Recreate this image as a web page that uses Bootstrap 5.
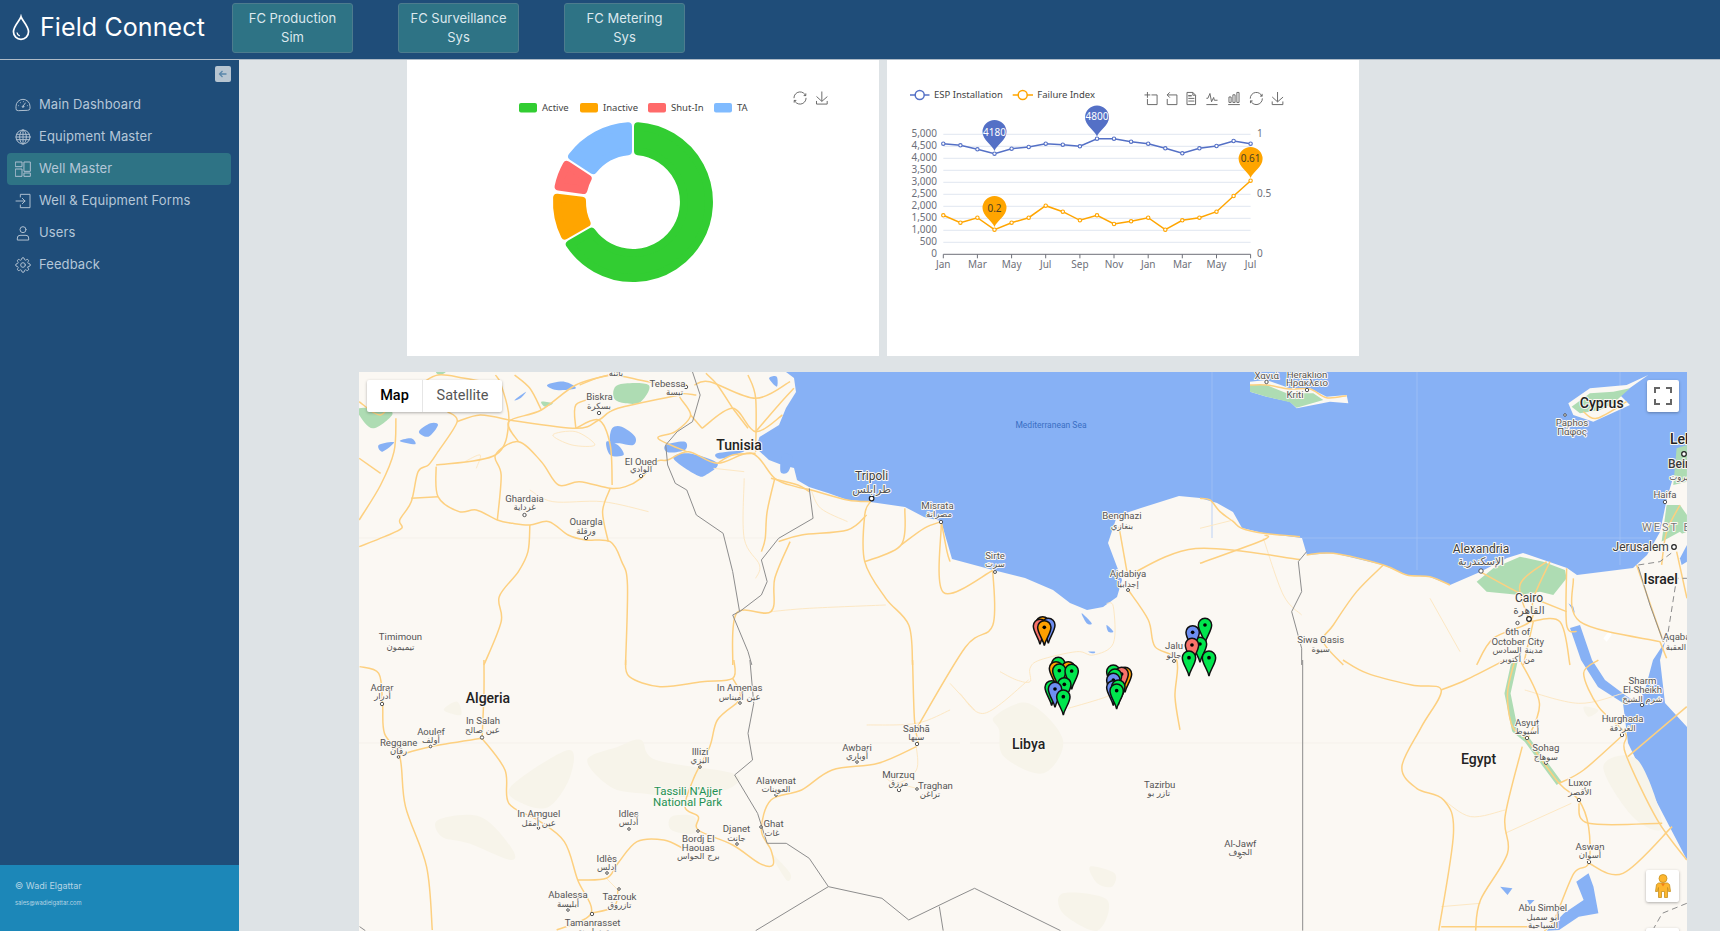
<!DOCTYPE html>
<html lang="en">
<head>
<meta charset="utf-8">
<title>Field Connect</title>
<link href="https://cdn.jsdelivr.net/npm/bootstrap@5.3.0/dist/css/bootstrap.min.css" rel="stylesheet">
<style>
html,body{height:100%;overflow:hidden}
body{background:#dee3e6;font-family:Inter,"Noto Sans",sans-serif}
.fc-top{height:60px;background:#1f4d79;border-bottom:1px solid #aebbc7;padding:0;flex-wrap:nowrap;align-items:flex-start;justify-content:flex-start}
.fc-brand{width:232px;height:55px;padding:0 0 0 11px;margin:0;gap:9px;color:#fff;font-size:25px;font-weight:400;letter-spacing:.1px}
.fc-brand:hover{color:#fff}
.fc-mods{gap:45px;margin-top:3px}
.fc-btn{width:121px;height:50px;padding:4px 11px;background:#2e7385;border:1px solid #4d7c8e;border-radius:3px;color:#dce8ee;font-size:13px;line-height:19px}
.fc-shell{height:calc(100vh - 60px);overflow:hidden}
.fc-side{width:239px;flex:none;background:#1f4d79}
.fc-collapse{width:16px;height:16px;padding:0;margin:6px 8px 0 0;background:#b7c5d1;border:0;border-radius:2px;line-height:0}
.fc-nav{margin:7px 8px 0 7px}
.fc-nav .nav-link{height:32px;padding:0 0 0 8px;gap:8px;color:#b5c7d8;font-size:13px;letter-spacing:.1px;border-radius:4px}
.fc-nav .nav-link.active{background:#2e7385;color:#b5c7d8}
.fc-nav svg{width:16px;height:16px;flex:none;fill:none;stroke:#aebfd0;stroke-width:1.5;stroke-linecap:round;stroke-linejoin:round}
.fc-foot{height:66px;background:#1c87b8;color:#b5d4e4;padding:14.500px 15px 0;font-size:9px;line-height:12px}
.fc-foot div+div{font-size:5.800px;margin-top:5px}
.fc-main{min-width:0}
.fc-charts{margin-left:168px;gap:8px;height:296px}
.fc-chart{width:472px;height:296px;border:0;border-radius:0}
.fc-chart svg{display:block}
.fc-chart text{font-family:"Noto Sans",sans-serif;font-size:10px;fill:#6e7079}
.fc-chart .lg{fill:#444;font-size:9.500px}
.fc-tool{fill:none;stroke:#666;stroke-width:4.400}
.fc-map{margin:16px 0 0 120px;width:1328px;height:559px;overflow:hidden}
.fc-map>svg{display:block}
.rd path{fill:none;stroke:#fdd080;stroke-width:1.500;vector-effect:non-scaling-stroke;stroke-linejoin:round}
.rm path{fill:none;stroke:#fde8c4;stroke-width:1;vector-effect:non-scaling-stroke}
.bd path{fill:none;stroke:#8d8d8d;stroke-width:1;vector-effect:non-scaling-stroke}
.wt{fill:#87b1f5}
.ds{fill:#f7f4ea}
.gr{fill:#aedcb3}
.lbl text{font-family:Roboto,"DejaVu Sans",sans-serif;font-size:9.600px;fill:#555;text-anchor:middle;dominant-baseline:central;paint-order:stroke;stroke:#fbf8f3;stroke-width:2px;stroke-linejoin:round}
.lbl text.ct{font-size:12px;fill:#3c3c3c}
.lbl text.cn{font-size:14px;font-weight:500;fill:#222}
.lbl text.pk{font-size:11.500px;fill:#1f9254}
.lbl text.se{font-size:8.500px;fill:#3a6fc4;stroke:none}
.lbl text.ws{font-size:11px;letter-spacing:2px;fill:#777}
.lbl text.ar{font-family:"DejaVu Sans",sans-serif;font-size:8.500px}
.pin-g{fill:#00e64d}.pin-o{fill:#ff9f00}.pin-b{fill:#6d8ef2}.pin-r{fill:#f8736a}
.pins use{stroke:#101010;stroke-width:4.500}
.fc-ctl{position:absolute;background:#fff;box-shadow:0 1px 3px rgba(0,0,0,.3);border-radius:2px}
.fc-mt{left:8px;top:8px;width:135px;height:32px;font-family:Roboto,sans-serif;font-size:14.500px;line-height:32px;text-align:center}
.fc-mt div:first-child{width:56px;color:#000;font-weight:500;border-right:1px solid #e6e6e6}
.fc-mt div:last-child{flex:1;color:#565656}
.fc-fs{right:8px;top:8px;width:32px;height:32px}
.fc-pg{right:8px;top:498px;width:33px;height:32px}
.fc-zm{right:8px;top:556px;width:33px;height:30px}
</style>
</head>
<body>
<nav class="navbar fc-top d-flex">
  <a class="navbar-brand fc-brand d-flex align-items-center" href="#">
    <svg width="20" height="28" viewBox="0 0 18 26" fill="none" stroke="#fff" stroke-width="1.600"><path d="M9 2.500C8 6 2 11 2 16.500a7 7 0 0 0 14 0C16 11 10 6 9 2.500Z"/><path d="M5.300 17.200a3.800 3.800 0 0 0 2.600 3.200" stroke-width="1.200"/></svg>
    <span>Field Connect</span>
  </a>
  <div class="d-flex fc-mods">
    <button class="btn fc-btn">FC Production Sim</button>
    <button class="btn fc-btn">FC Surveillance Sys</button>
    <button class="btn fc-btn">FC Metering Sys</button>
  </div>
</nav>
<div class="d-flex fc-shell">
  <aside class="fc-side d-flex flex-column">
    <div class="d-flex justify-content-end">
      <button class="fc-collapse" aria-label="Collapse"><svg width="16" height="16" viewBox="0 0 16 16" fill="none" stroke="#5a87ab" stroke-width="1.300"><path d="M11.500 8H4.500M7.500 5 4.500 8l3 3"/></svg></button>
    </div>
    <ul class="nav flex-column fc-nav flex-grow-1">
      <li class="nav-item"><a class="nav-link d-flex align-items-center" href="#"><svg viewBox="0 0 24 24"><path d="M4.500 20.500A3 3 0 0 1 1.500 17V14a10.500 10.500 0 0 1 21 0v3a3 3 0 0 1-3 3Z"/><path d="m12 14 3.500-5M5.500 13h.01M8 8.500h.01M12.500 7h.01M18.500 13h.01"/><circle cx="12" cy="14.500" r="1.200"/></svg><span>Main Dashboard</span></a></li>
      <li class="nav-item"><a class="nav-link d-flex align-items-center" href="#"><svg viewBox="0 0 24 24"><circle cx="12" cy="12" r="10.500"/><ellipse cx="12" cy="12" rx="5" ry="10.500"/><path d="M12 1.500v21M2.200 8h19.600M2.200 16h19.600M1.500 12h21"/></svg><span>Equipment Master</span></a></li>
      <li class="nav-item"><a class="nav-link active d-flex align-items-center" href="#"><svg viewBox="0 0 24 24"><rect x="1" y="1.500" width="9.500" height="7"/><rect x="1" y="12" width="9.500" height="11"/><rect x="14" y="1.500" width="9" height="14"/><rect x="14" y="18" width="9" height="5"/></svg><span>Well Master</span></a></li>
      <li class="nav-item"><a class="nav-link d-flex align-items-center" href="#"><svg viewBox="0 0 24 24"><path d="M8 6V2h14.500v20H8v-4"/><path d="M1.500 12H15M11 8l4 4-4 4"/></svg><span>Well &amp; Equipment Forms</span></a></li>
      <li class="nav-item"><a class="nav-link d-flex align-items-center" href="#"><svg viewBox="0 0 24 24"><circle cx="12" cy="7" r="4.500"/><path d="M3.500 22v-2.500a4 4 0 0 1 4-4h9a4 4 0 0 1 4 4V22Z"/></svg><span>Users</span></a></li>
      <li class="nav-item"><a class="nav-link d-flex align-items-center" href="#"><svg viewBox="0 0 24 24"><circle cx="12" cy="12" r="3.500"/><path d="M19.400 15a1.650 1.650 0 0 0 .33 1.820l.06.06a2 2 0 0 1 0 2.830 2 2 0 0 1-2.830 0l-.06-.06a1.650 1.650 0 0 0-1.820-.33 1.650 1.650 0 0 0-1 1.510V21a2 2 0 0 1-2 2 2 2 0 0 1-2-2v-.09A1.650 1.650 0 0 0 9 19.400a1.650 1.650 0 0 0-1.820.33l-.06.06a2 2 0 0 1-2.830 0 2 2 0 0 1 0-2.830l.06-.06a1.650 1.650 0 0 0 .33-1.820 1.650 1.650 0 0 0-1.510-1H3a2 2 0 0 1-2-2 2 2 0 0 1 2-2h.09A1.650 1.650 0 0 0 4.600 9a1.650 1.650 0 0 0-.33-1.820l-.06-.06a2 2 0 0 1 0-2.830 2 2 0 0 1 2.830 0l.06.06a1.650 1.650 0 0 0 1.820.33H9a1.650 1.650 0 0 0 1-1.510V3a2 2 0 0 1 2-2 2 2 0 0 1 2 2v.09a1.650 1.650 0 0 0 1 1.510 1.650 1.650 0 0 0 1.820-.33l.06-.06a2 2 0 0 1 2.830 0 2 2 0 0 1 0 2.830l-.06.06a1.650 1.650 0 0 0-.33 1.820V9a1.650 1.650 0 0 0 1.510 1H21a2 2 0 0 1 2 2 2 2 0 0 1-2 2h-.09a1.650 1.650 0 0 0-1.510 1Z"/></svg><span>Feedback</span></a></li>
    </ul>
    <div class="fc-foot"><div>© Wadi Elgattar</div><div>sales@wadielgattar.com</div></div>
  </aside>
  <main class="fc-main flex-grow-1">
    <div class="d-flex fc-charts">
      <div class="card fc-chart">
        <svg width="472" height="296" viewBox="0 0 472 296">
          <defs>
            <path id="i-restore" d="M3.800,33.400 M47,18.900h9.800V8.700 M56.300,20.100 C52.100,9,40.500,0.600,26.800,2.100C12.600,3.700,1.600,16.200,2.100,30.600 M13,41.100H3.100v10.200 M3.700,39.900c4.200,11.100,15.800,19.500,29.500,18 c14.200-1.600,25.200-14.100,24.700-28.500"/>
            <path id="i-save" d="M4.700,22.900L29.300,45.500L54.700,23.400M4.600,43.600L4.600,58L53.800,58L53.800,43.600M29.200,45.100L29.200,0"/>
          </defs>
          <g stroke-linejoin="round" stroke-width="8" transform="translate(226 142)">
            <path fill="#32cd32" stroke="#32cd32" d="M5,-75.800A76,76 0 1 1 -63.200,42.300L-41.500,29.700A51,51 0 1 0 5,-50.800Z"/>
            <path fill="#ffa500" stroke="#ffa500" d="M-68.200,33.600A76,76 0 0 1 -75.900,-4.200L-51,-1.200A51,51 0 0 0 -46.400,21.100Z"/>
            <path fill="#ff6a6a" stroke="#ff6a6a" d="M-74.400,-15.500A76,76 0 0 1 -66.300,-37.100L-45.300,-23.500A51,51 0 0 0 -49.600,-12Z"/>
            <path fill="#80bbff" stroke="#80bbff" d="M-60.900,-45.500A76,76 0 0 1 -5,-75.800L-5,-50.800A51,51 0 0 0 -39.900,-31.800Z"/>
          </g>
          <rect x="112" y="43" width="18" height="9.500" rx="2" fill="#32cd32"/><text class="lg" x="135" y="51">Active</text>
          <rect x="173" y="43" width="18" height="9.500" rx="2" fill="#ffa500"/><text class="lg" x="196" y="51">Inactive</text>
          <rect x="241" y="43" width="18" height="9.500" rx="2" fill="#ff6a6a"/><text class="lg" x="264" y="51">Shut-In</text>
          <rect x="307" y="43" width="18" height="9.500" rx="2" fill="#80bbff"/><text class="lg" x="330" y="51">TA</text>
          <use href="#i-restore" class="fc-tool" transform="translate(386.500 31.500) scale(.217)"/>
          <use href="#i-save" class="fc-tool" transform="translate(408.500 31.500) scale(.217)"/>
        </svg>
      </div>
      <div class="card fc-chart">
        <svg width="472" height="296" viewBox="0 0 472 296">
          <g stroke="#e0e6f1" stroke-width="1">
            <path d="M56.300 74.300H363.600M56.300 86.300H363.600M56.300 98.300H363.600M56.300 110.300H363.600M56.300 122.300H363.600M56.300 134.300H363.600M56.300 146.300H363.600M56.300 158.300H363.600M56.300 170.300H363.600M56.300 182.300H363.600"/>
          </g>
          <path d="M56.300 194.300H363.600M56.300 194.300v4M90.400 194.300v4M124.600 194.300v4M158.700 194.300v4M192.900 194.300v4M227 194.300v4M261.200 194.300v4M295.300 194.300v4M329.500 194.300v4M363.600 194.300v4" stroke="#6e7079" fill="none"/>
          <g text-anchor="end">
            <text x="50" y="76.500">5,000</text><text x="50" y="88.500">4,500</text><text x="50" y="100.500">4,000</text><text x="50" y="112.500">3,500</text><text x="50" y="124.500">3,000</text><text x="50" y="136.500">2,500</text><text x="50" y="148.500">2,000</text><text x="50" y="160.500">1,500</text><text x="50" y="172.500">1,000</text><text x="50" y="184.500">500</text><text x="50" y="196.500">0</text>
          </g>
          <text x="370" y="76.500">1</text><text x="370" y="136.500">0.5</text><text x="370" y="196.500">0</text>
          <g text-anchor="middle">
            <text x="56.300" y="208">Jan</text><text x="90.400" y="208">Mar</text><text x="124.600" y="208">May</text><text x="158.700" y="208">Jul</text><text x="192.900" y="208">Sep</text><text x="227" y="208">Nov</text><text x="261.200" y="208">Jan</text><text x="295.300" y="208">Mar</text><text x="329.500" y="208">May</text><text x="363.600" y="208">Jul</text>
          </g>
          <polyline fill="none" stroke="#5470c6" stroke-width="1.500" points="56.3,83.7 73.4,85.3 90.4,89.3 107.5,93.7 124.6,88.7 141.7,87 158.7,83.7 175.8,84.7 192.9,86.3 210,78.7 227,78.7 244.1,81.7 261.2,83.7 278.3,88.3 295.3,93.3 312.4,88.3 329.500,86 346.6,81 363.6,83.7"/>
          <g fill="#fff" stroke="#5470c6" stroke-width="1.100">
            <circle cx="56.3" cy="83.7" r="1.700"/><circle cx="73.4" cy="85.3" r="1.700"/><circle cx="90.4" cy="89.3" r="1.700"/><circle cx="107.5" cy="93.7" r="1.700"/><circle cx="124.6" cy="88.7" r="1.700"/><circle cx="141.7" cy="87" r="1.700"/><circle cx="158.7" cy="83.7" r="1.700"/><circle cx="175.8" cy="84.7" r="1.700"/><circle cx="192.9" cy="86.3" r="1.700"/><circle cx="210" cy="78.7" r="1.700"/><circle cx="227" cy="78.7" r="1.700"/><circle cx="244.1" cy="81.7" r="1.700"/><circle cx="261.2" cy="83.7" r="1.700"/><circle cx="278.3" cy="88.3" r="1.700"/><circle cx="295.3" cy="93.3" r="1.700"/><circle cx="312.4" cy="88.3" r="1.700"/><circle cx="329.5" cy="86" r="1.700"/><circle cx="346.6" cy="81" r="1.700"/><circle cx="363.6" cy="83.7" r="1.700"/>
          </g>
          <polyline fill="none" stroke="#ffa500" stroke-width="1.500" points="56.3,155.3 73.4,162.7 90.4,157.7 107.5,169.7 124.6,162.7 141.7,157.7 158.7,145.7 175.8,151.7 192.9,160.3 210,155.3 227,164 244.1,161.3 261.2,157.7 278.3,169.7 295.3,160.3 312.4,157.7 329.5,151.7 346.6,136 363.6,120.7"/>
          <g fill="#fff" stroke="#ffa500" stroke-width="1.100">
            <circle cx="56.3" cy="155.3" r="1.700"/><circle cx="73.4" cy="162.7" r="1.700"/><circle cx="90.4" cy="157.7" r="1.700"/><circle cx="107.5" cy="169.7" r="1.700"/><circle cx="124.6" cy="162.7" r="1.700"/><circle cx="141.7" cy="157.7" r="1.700"/><circle cx="158.7" cy="145.7" r="1.700"/><circle cx="175.8" cy="151.7" r="1.700"/><circle cx="192.9" cy="160.3" r="1.700"/><circle cx="210" cy="155.3" r="1.700"/><circle cx="227" cy="164" r="1.700"/><circle cx="244.1" cy="161.3" r="1.700"/><circle cx="261.2" cy="157.7" r="1.700"/><circle cx="278.3" cy="169.7" r="1.700"/><circle cx="295.3" cy="160.3" r="1.700"/><circle cx="312.4" cy="157.7" r="1.700"/><circle cx="329.5" cy="151.7" r="1.700"/><circle cx="346.6" cy="136" r="1.700"/><circle cx="363.6" cy="120.7" r="1.700"/>
          </g>
          <g text-anchor="middle">
            <path fill="#5470c6" d="M107.500 91C105.500 85 95.500 80 95.500 72A12 12 0 1 1 119.500 72C119.500 80 109.500 85 107.500 91Z"/>
            <text x="107.500" y="75.500" style="fill:#fff">4180</text>
            <path fill="#5470c6" d="M210 76.500C208 70.500 198 65.500 198 57.500A12 12 0 1 1 222 57.500C222 65.500 212 70.500 210 76.500Z"/>
            <text x="210" y="60" style="fill:#fff">4800</text>
            <path fill="#ffa500" d="M107.500 167C105.500 161 95.500 156 95.500 148A12 12 0 1 1 119.500 148C119.500 156 109.500 161 107.500 167Z"/>
            <text x="107.500" y="151.500" style="fill:#4d4020">0.2</text>
            <path fill="#ffa500" d="M363.600 118C361.600 112 351.600 107 351.600 99A12 12 0 1 1 375.600 99C375.600 107 365.600 112 363.600 118Z"/>
            <text x="363.600" y="102" style="fill:#4d4020">0.61</text>
          </g>
          <path d="M23 35H42.500" stroke="#5470c6" stroke-width="1.500"/><circle cx="32.700" cy="35" r="4.500" fill="#fff" stroke="#5470c6" stroke-width="1.500"/>
          <text class="lg" x="47" y="37.500">ESP Installation</text>
          <path d="M125.700 35H146" stroke="#ffa500" stroke-width="1.500"/><circle cx="135.700" cy="35" r="4.500" fill="#fff" stroke="#ffa500" stroke-width="1.500"/>
          <text class="lg" x="150.300" y="37.500">Failure Index</text>
          <g class="fc-tool">
            <path transform="translate(257.500 32) scale(.217)" d="M0,13.500h26.900 M13.500,26.900V0 M32.100,13.500H58V58H13.500 V32.100"/>
            <path transform="translate(278 32) scale(.217)" d="M22,1.400L9.900,13.500l12.300,12.300 M10.300,13.500H54.900v44.600 H10.300v-26"/>
            <path transform="translate(297.500 32) scale(.217)" d="M17.500,17.300H33 M17.500,17.300H33 M45.400,29.500h-28 M11.500,2v56H51V14.800L38.400,2H11.500z M38.400,2.200v12.700H51 M45.400,41.700h-28"/>
            <path transform="translate(318.500 32) scale(.217)" d="M4.100,28.900h7.100l9.300-22l7.400,38l9.700-19.700l3,12.800h14.900M4.100,58h51.400"/>
            <path transform="translate(340.500 32) scale(.217)" d="M6.700,22.900h10V48h-10V22.900zM24.900,13h10v35h-10V13zM43.200,2h10v46h-10V2zM3.100,58h53.700"/>
            <path transform="translate(362.800 32) scale(.217)" d="M3.800,33.400 M47,18.900h9.800V8.700 M56.300,20.100 C52.100,9,40.500,0.600,26.800,2.100C12.600,3.700,1.600,16.200,2.100,30.600 M13,41.100H3.100v10.200 M3.700,39.900c4.200,11.100,15.800,19.500,29.500,18 c14.200-1.600,25.200-14.100,24.700-28.500"/>
            <path transform="translate(384.200 32) scale(.217)" d="M4.700,22.900L29.300,45.500L54.700,23.400M4.600,43.600L4.600,58L53.800,58L53.800,43.600M29.200,45.100L29.200,0"/>
          </g>
        </svg>
      </div>
    </div>
    <div class="fc-map position-relative">
      <svg width="1328" height="559" viewBox="359 372 1328 559">
        <defs>
          <g id="pin"><path d="M0,55C-4,35 -20,18 -20,0A20,20 0 1 1 20,0C20,18 4,35 0,55Z"/><circle r="5.500" fill="#000" stroke="none"/></g>
        </defs>
        <rect x="359" y="372" width="1328" height="559" fill="#fbf8f3"/>
        <path class="wt" d="M786,372 794,378 796,392 786,408 779,425 759.500,437 756,448 769,460 782,465 794,468 797,480 809,487 828,493 847.500,500 870.500,502 905,507 924,517 941,521 948,545 952,559 993,570 1025,578 1053,590 1070,603 1087,610 1103,607 1117,597 1122,580 1108,543 1117,516 1141,508 1179,496 1200,498 1217,503 1233,512 1242,528 1263,533 1302,538 1307,555 1333,553 1383,565 1407,575 1430,577 1450,585 1480,572 1507,558 1523,553 1567,568 1577,575 1593,573 1633,568 1647,555 1660,532 1667,498 1673,478 1687,458V372Z"/>
        <path d="M1212 372V538M1417 372V570M1620 372V565M1302 538H1650" stroke="#a3c3f7" stroke-width=".7" fill="none"/>
        <path d="M359 538H780M970 743H1687M359 743H960" stroke="#f3efe8" stroke-width=".7" fill="none"/>
        <path class="wt" d="M1570,628 1581,660 1598,687 1623,703 1628,743 1652,793 1687,860V727L1665,703 1660,660 1665,642 1653,660 1645,690 1637,703 1625,695 1605,680 1592,660 1580,625Z"/>
        <g transform="translate(350 660) scale(.3827 .3333)" class="ds">
          <path d="M420,380 570,270 575,350 520,440 450,430Z"/><path d="M620,300 700,260 760,240 800,300 1000,340 1000,380 900,410 760,400 680,380Z"/><path d="M230,480 340,470 420,560 420,600 310,550 240,530Z"/><path d="M840,470 900,470 900,520 840,510Z"/><path d="M1100,580 1150,640 1140,660Z"/><path d="M245,150 280,125 290,165Z"/>
        </g>
        <g transform="translate(950 660) scale(.4912 .3333)" class="ds">
          <path d="M90,170 160,130 230,240 190,340 110,290 100,210Z"/><path d="M230,700 320,720 300,812 230,760Z"/><path d="M285,620 335,640 330,680 300,670Z"/><path d="M1290,140 1320,150 1300,170Z"/><path d="M1330,320 1400,300 1450,500 1390,470Z"/>
        </g>
        <g transform="translate(350 365) scale(.3827 .3333)">
          <g class="gr"><path d="M700,60 780,60 760,110 720,115 690,100Z"/><path d="M500,110 530,115 510,125Z"/><path d="M24,150 60,190 110,150 90,130 24,130Z"/><path d="M225,21 250,21 235,30Z"/></g>
          <g class="wt"><path d="M515,60 560,50 590,70 540,75Z"/><path d="M430,105 460,80 445,100Z"/><path d="M180,200 210,175 230,180 205,215Z"/><path d="M75,240 115,232 85,260Z"/><path d="M130,228 160,220 170,238Z"/><path d="M685,190 710,185 745,215 740,240 705,235 680,230Z"/><path d="M670,230 700,240 715,270 680,270Z"/><path d="M825,240 875,230 875,255 830,262Z"/><path d="M845,280 885,265 960,295 930,330 905,330Z"/><path d="M960,265 1030,258 980,278 960,280Z"/><path d="M1095,40 1115,35 1115,65Z"/><path d="M1130,270 1155,275 1145,320 1125,320Z"/></g>
        </g>
        <g transform="translate(1200 365) scale(.3333)">
          <path fill="#fbf8f3" d="M150,50 200,45 270,70 330,70 380,95 440,90 445,115 390,110 290,130 270,110 200,95 150,80Z"/>
          <path class="gr" d="M150,60 200,60 260,85 340,85 370,105 290,128 270,112 200,95 150,80Z"/>
          <path fill="#fbf8f3" d="M1105,115 1170,70 1280,60 1345,30 1260,90 1290,120 1180,170 1120,150Z"/>
          <path class="gr" d="M1115,125 1170,85 1240,80 1290,70 1240,115 1200,135 1140,145Z"/>
          <path class="gr" d="M830,650 880,610 960,575 1030,590 1095,615 1100,640 1060,690 1020,680 960,690 860,680Z"/>
          <path class="gr" d="M1400,420 1440,420 1461,450 1461,500 1385,530Z"/>
          <path fill="#fbf8f3" d="M1385,530 1440,500 1461,520 1461,620 1370,600 1330,590Z"/>
          <path class="gr" d="M1430,250 1461,240 1461,350 1420,360Z"/>
          <path fill="#87b1f5" d="M1120,725 1105,715 1125,745Z"/><path fill="#87b1f5" d="M1440,580 1461,540 1461,590 1445,600Z"/>
          <path fill="#fff" d="M1210,820 1230,795 1235,810 1220,830Z"/>
        </g>
        <g transform="translate(950 660) scale(.4912 .3333)">
          <path fill="none" stroke="#aedcb3" stroke-width="6" vector-effect="non-scaling-stroke" stroke-linejoin="round" d="M1150,0 1135,100 1150,210 1175,240 1240,370"/>
          <path fill="#87b1f5" d="M1300,640 1310,680 1320,760 1280,770 1240,810 1215,812 1250,760 1290,720 1275,665Z"/><path fill="#87b1f5" d="M1120,680 1145,685 1135,705Z"/><path fill="#87b1f5" d="M1175,720 1190,720 1180,735Z"/>
        </g>
        <g transform="translate(1000 590) scale(.3333)" class="wt"><path d="M245,70 275,100 260,100Z"/><path d="M320,105 340,125 325,125Z"/><path d="M265,185 285,185 280,190Z"/></g>

        <g class="rm">
          <g transform="translate(350 365) scale(.3827 .3333)"><path d="M470,375 530,410 660,410 780,440"/><path d="M530,210 590,200 640,240 580,240Z"/><path d="M1030,340 1030,520 1070,600 1060,640"/><path d="M1100,740 1200,730 1400,720"/><path d="M1205,375 1230,430 1300,470"/><path d="M300,290 340,270 330,310"/><path d="M950,310 1030,320"/></g>
          <g transform="translate(350 660) scale(.3827 .3333)"><path d="M1350,195 1480,190 1568,150"/><path d="M1480,260 1480,330 1430,370 1395,350"/><path d="M670,655 700,690"/><path d="M1430,370 1480,385"/></g>
          <g transform="translate(1000 590) scale(.3333)"><path d="M0,245 50,270 90,275 90,235 120,210 230,185 280,195 340,160 340,50 320,40"/><path d="M205,355 320,320 340,300"/></g>
          <g transform="translate(1200 365) scale(.3333)"><path d="M190,520 250,690 305,750"/><path d="M690,700 780,860"/><path d="M0,490 100,465"/></g>
          <g transform="translate(950 660) scale(.4912 .3333)"><path d="M0,70 50,150"/><path d="M1005,420 1060,470 1130,450"/><path d="M1130,520 1265,430"/><path d="M1000,740 1080,730"/><path d="M20,100 70,160 160,60"/><path d="M1170,90 1280,130 1370,100"/></g>
        </g>
        <g class="rd">
          <g transform="translate(350 365) scale(.3827 .3333)">
            <path d="M24,545 90,515 135,490 130,465 160,410 178,320 205,300 230,260 280,170 255,140"/>
            <path d="M225,305 230,395 285,440 330,435 385,465 425,475 470,480 520,470 570,510 615,525 680,530 710,590 725,660 720,900"/>
            <path d="M470,480 465,560 440,620 390,695 395,770 350,900"/>
            <path d="M385,465 395,330 380,270 440,230 500,290 545,360 600,350 680,370 720,365 760,340 800,290 830,285 885,260 960,295 1050,265 1110,340 1165,365 1205,375 1300,405 1360,410"/>
            <path d="M680,370 660,440 675,530"/>
            <path d="M440,230 415,170 500,135 590,60 680,30"/>
            <path d="M590,190 650,165 680,240 685,360"/>
            <path d="M225,300 380,270 415,165 395,60 380,30"/>
            <path d="M120,160 115,260 80,360 24,465"/><path d="M24,280 80,325"/><path d="M24,110 80,150 120,90"/><path d="M230,395 160,400"/>
            <path d="M1360,410 1345,450 1345,590 1400,700 1460,780 1470,900"/>
            <path d="M1450,430 1440,540 1345,590"/><path d="M1120,530 1180,510 1300,495 1350,450"/><path d="M1545,470 1500,490 1440,540"/><path d="M1545,470 1560,560 1568,590"/>
            <path d="M1150,530 1110,640 1100,740 1010,745 1000,900"/>
            <path d="M1110,340 1090,440 1085,520 1075,560"/>
            <path d="M880,260 805,220 850,200 890,150 860,90 905,90"/><path d="M1060,260 1060,100 1040,30"/><path d="M920,190 1000,130 1060,200 1130,150"/><path d="M900,60 940,50 1060,100 1150,50"/><path d="M920,190 890,150"/><path d="M600,60 680,30 780,50 880,60"/><path d="M415,165 590,190 650,165 700,130 860,90"/><path d="M1000,130 960,60 930,25"/>
            <path d="M1100,340 1170,360 1200,380"/><path d="M120,90 180,60 230,30 300,40 395,60"/><path d="M280,170 340,150 415,165"/><path d="M500,135 470,70 430,30"/><path d="M590,190 590,120 640,100"/><path d="M1060,200 1120,120 1160,70"/><path d="M1000,130 1040,190"/><path d="M960,295 1000,270 1060,265"/>
          </g>
          <g transform="translate(350 660) scale(.3827 .3333)">
            <path d="M25,20 75,40 85,130 90,220 130,290 145,440 200,620 215,810"/>
            <path d="M130,285 210,260 345,235"/>
            <path d="M345,235 405,330 415,430 490,480 560,545 595,660 630,760 540,810"/>
            <path d="M595,660 670,655 700,610 750,545 820,540 870,565"/>
            <path d="M1010,130 960,180 940,260 900,350 875,440 910,470 910,510 1000,555 1070,610 1105,615 1100,570 1075,510 1100,420 1180,390 1260,330 1380,310 1480,260"/>
            <path d="M720,0 730,50 810,80 920,65 1000,55 1003,0"/><path d="M350,0 350,100 345,235"/><path d="M1470,0 1475,180 1485,250"/><path d="M1010,130 1020,100 1000,55"/><path d="M630,760 690,740 700,690"/>
          </g>
          <g transform="translate(1000 590) scale(.3333)">
            <path d="M385,0 445,90 465,170 530,210 525,320 540,420"/>
          </g>
          <g transform="translate(1200 365) scale(.3333)">
            <path d="M0,595 190,525 195,510"/><path d="M550,600 470,680 400,780 370,830 430,900"/><path d="M830,900 880,820 990,770 1000,700 1050,590"/><path d="M840,620 950,680 1000,700"/><path d="M1100,610 1100,780 1130,800"/><path d="M1120,640 1140,770 1380,830"/><path d="M1310,600 1390,830"/><path d="M1040,590 960,660 990,770"/><path d="M1000,700 1100,740"/><path d="M990,770 1080,770 1110,900"/><path d="M970,900 1000,770"/><path d="M1385,600 1400,500 1440,420"/><path d="M1430,560 1461,700"/><path d="M1380,830 1400,880"/><path d="M150,60 200,60 270,72 330,72 380,98 440,92"/><path d="M1150,140 1190,160 1280,110"/>
            <path d="M0,400 30,405 60,440 100,470 125,490 190,505 300,515"/><path d="M320,570 400,565 550,600 620,630 690,635 750,660"/>
          </g>
          <g transform="translate(950 660) scale(.4912 .3333)">
            <path d="M800,0 850,40 940,75 1000,90 960,200 920,320 950,385 1005,420 1025,520 995,812"/>
            <path d="M1165,260 1130,470 1135,580 1080,720 1070,812"/>
            <path d="M1000,90 1050,60 1130,0"/>
            <path d="M1150,0 1135,100 1145,200 1175,240 1240,370 1280,420 1300,500 1300,610 1270,640 1230,780 1210,812"/>
            <path d="M1280,430 1300,490 1450,490"/><path d="M1300,610 1370,640 1470,500"/><path d="M1370,225 1290,330 1240,370"/><path d="M1380,290 1500,140"/>
            <path d="M1500,600 1440,480 1375,280 1375,220 1320,140 1290,40 1320,0"/><path d="M1000,800 1200,800"/><path d="M1175,240 1200,130 1160,0"/>
          </g>
          <g transform="scale(1.097)">
            <path d="M905,520 905,570 880,590 835,665"/><path d="M1028,525 1020,480"/><path d="M1028,525 1090,500 1185,510"/><path d="M858,478 860,540 905,520"/>
          </g>
        </g>
        <g class="bd">
          <g transform="translate(350 365) scale(.3827 .3333)"><path d="M895,21 915,90 895,170 855,200 825,240 830,300 850,355 880,375 905,450 975,505 1000,620 1018,740 1000,750 1040,860 1050,900"/><path d="M1018,740 1075,690 1090,650 1075,585 1120,520 1210,460 1200,370"/></g>
          <g transform="translate(350 660) scale(.3827 .3333)"><path d="M1045,0 1055,130 1040,220 1052,300 1005,345 1065,460 1090,550 1140,550 1200,595 1250,680 1390,715 1460,780 1568,720"/><path d="M1250,680 1060,812"/><path d="M1540,740 1550,812"/><path d="M25,800 40,812"/></g>
          <g transform="translate(950 660) scale(.4912 .3333)"><path d="M0,720 50,685 225,812"/><path d="M718,0V812"/><path d="M1500,730 1450,760 1430,812" stroke-dasharray="6 4"/></g>
          <g transform="translate(1200 365) scale(.3333)"><path d="M320,560 295,590 305,680 275,740 305,850 305,900"/><path d="M1315,605 1350,720 1390,830"/><path d="M1315,600 1380,590 1420,560" stroke-dasharray="6 4"/><path d="M1400,830 1430,640 1461,640" stroke-dasharray="6 4"/></g>
        </g>
        <g fill="#fff" stroke="#444" stroke-width=".9">
          <circle cx="599" cy="413" r="1.700"/><circle cx="686" cy="387" r="1.700"/><circle cx="641" cy="476" r="1.700"/><circle cx="524.500" cy="515" r="1.700"/><circle cx="586" cy="538" r="1.700"/><circle cx="382" cy="704" r="1.700"/><circle cx="482" cy="737.500" r="1.700"/><circle cx="430.500" cy="746.500" r="1.300"/><circle cx="398.500" cy="757" r="1.300"/><circle cx="740" cy="703" r="1.300"/><circle cx="700" cy="767" r="1.300"/><circle cx="917" cy="744" r="1.700"/><circle cx="857" cy="762" r="1.300"/><circle cx="776" cy="795" r="1.300"/><circle cx="899" cy="790" r="1.700"/><circle cx="917" cy="789" r="1.300"/><circle cx="538.500" cy="828" r="1.300"/><circle cx="629" cy="829" r="1.300"/><circle cx="761" cy="827" r="1.300"/><circle cx="737" cy="844" r="1.300"/><circle cx="698" cy="831" r="1.300"/><circle cx="607" cy="873" r="1.300"/><circle cx="568" cy="910" r="1.300"/><circle cx="619" cy="889" r="1.300"/><circle cx="592" cy="914" r="1.700"/><circle cx="941" cy="522" r="1.700"/><circle cx="995" cy="572" r="1.500"/><circle cx="1128" cy="590" r="1.500"/><circle cx="1174" cy="661" r="1.500"/><circle cx="1240" cy="857" r="1.300"/><circle cx="1527" cy="738" r="1.700"/><circle cx="1546" cy="763" r="1.500"/><circle cx="1579" cy="800" r="1.700"/><circle cx="1622" cy="735" r="1.700"/><circle cx="1642" cy="705" r="1.700"/><circle cx="1589" cy="862" r="1.700"/><circle cx="1266.500" cy="382" r="1.700"/><circle cx="1307" cy="390" r="1.700"/><circle cx="1565" cy="415" r="1.300"/><circle cx="1665" cy="502" r="1.700"/><circle cx="1481" cy="571" r="2.200"/><circle cx="1517.500" cy="623" r="1.700"/>
        </g>
        <g fill="#fff" stroke="#222" stroke-width="1.200"><circle cx="871.600" cy="498.500" r="2.300"/><circle cx="1529" cy="619" r="2.300"/><circle cx="1674" cy="547" r="2.300"/><circle cx="1684" cy="454" r="2.300"/></g>
        <g class="lbl">
          <text x="616" y="373" class="ar">باتنة</text><text x="599.500" y="396">Biskra</text><text x="599" y="406" class="ar">بسكرة</text>
          <text x="667.600" y="383">Tebessa</text><text x="674.500" y="392" class="ar">تبسة</text>
          <text x="739" y="445" class="cn">Tunisia</text>
          <text x="641" y="461">El Oued</text><text x="641" y="469" class="ar">الوادي</text>
          <text x="524.500" y="498">Ghardaia</text><text x="524.500" y="507" class="ar">غرداية</text>
          <text x="586" y="521.700">Ouargla</text><text x="586" y="530.500" class="ar">ورقلة</text>
          <text x="400.500" y="636.700">Timimoun</text><text x="400.500" y="646.700" class="ar">تيميمون</text>
          <text x="871.600" y="476" class="ct">Tripoli</text><text x="871.600" y="489" class="ar" style="font-size:11px">طرابلس</text>
          <text x="937.500" y="505">Misrata</text><text x="939" y="514" class="ar">مصراتة</text>
          <text x="995" y="555">Sirte</text><text x="995" y="564" class="ar">سرت</text>
          <text x="1122" y="515.600">Benghazi</text><text x="1122" y="525.500" class="ar">بنغازي</text>
          <text x="1128" y="573.700">Ajdabiya</text><text x="1128" y="583.600" class="ar">إجدابيا</text>
          <text x="1174" y="645.700">Jalu</text><text x="1174" y="655" class="ar">جالو</text>
          <text x="382" y="687">Adrar</text><text x="382.500" y="696" class="ar">أدرار</text>
          <text x="488" y="697.700" class="cn">Algeria</text>
          <text x="483" y="720.700">In Salah</text><text x="482.400" y="730.300" class="ar">عين صالح</text>
          <text x="431" y="731.300">Aoulef</text><text x="431" y="740" class="ar">أولف</text>
          <text x="398.600" y="742">Reggane</text><text x="398.600" y="750.500" class="ar">رقان</text>
          <text x="739.600" y="687.300">In Amenas</text><text x="739.600" y="696.700" class="ar">عين أميناس</text>
          <text x="700" y="751">Illizi</text><text x="700" y="760" class="ar">اليزي</text>
          <text x="916.400" y="728">Sabhā</text><text x="916.400" y="737.300" class="ar">سبها</text>
          <text x="857" y="747.300">Awbari</text><text x="857" y="756.300" class="ar">أوباري</text>
          <text x="776" y="780">Alawenat</text><text x="776" y="789" class="ar">العوينات</text>
          <text x="898.400" y="774">Murzuq</text><text x="898.400" y="783" class="ar">مرزق</text>
          <text x="935.500" y="785">Traghan</text><text x="930" y="794" class="ar">تراغن</text>
          <text x="688" y="790.700" class="pk">Tassili N'Ajjer</text><text x="687.500" y="801.700" class="pk">National Park</text>
          <text x="538.700" y="813.700">In Amguel</text><text x="538.700" y="822.700" class="ar">عين أمقل</text>
          <text x="628.600" y="813.300">Idles</text><text x="628.600" y="822.300" class="ar">أدلس</text>
          <text x="773.600" y="823.700">Ghat</text><text x="772" y="832.700" class="ar">غات</text>
          <text x="736.500" y="828.700">Djanet</text><text x="736.500" y="837.700" class="ar">جانت</text>
          <text x="698.300" y="838">Bordj El</text><text x="698.300" y="847">Haouas</text><text x="698.300" y="856.300" class="ar">برج الحواس</text>
          <text x="606.800" y="858">Idlès</text><text x="606.800" y="867.300" class="ar">إدلس</text>
          <text x="568" y="894.700">Abalessa</text><text x="568" y="903.700" class="ar">أبليسة</text>
          <text x="619.400" y="896.300">Tazrouk</text><text x="619.400" y="905.300" class="ar">تازروق</text>
          <text x="592.600" y="922">Tamanrasset</text><text x="592.600" y="931" class="ar">تمنراست</text>
          <text x="1028.600" y="744.300" class="cn">Libya</text>
          <text x="1159.700" y="784">Tazirbu</text><text x="1158.800" y="793.300" class="ar">تازر بو</text>
          <text x="1240.300" y="843">Al-Jawf</text><text x="1240.300" y="852" class="ar">الجوف</text>
          <text x="1478.500" y="759" class="cn">Egypt</text>
          <text x="1527" y="722">Asyut</text><text x="1527" y="731" class="ar">أسيوط</text>
          <text x="1545.800" y="747.700">Sohag</text><text x="1545.800" y="756.700" class="ar">سوهاج</text>
          <text x="1580" y="782.700">Luxor</text><text x="1580" y="791.700" class="ar">الأقصر</text>
          <text x="1622.600" y="718.700">Hurghada</text><text x="1622.600" y="727.700" class="ar">الغردقة</text>
          <text x="1642.500" y="680.700">Sharm</text><text x="1642.500" y="689.700">El-Sheikh</text><text x="1642.500" y="699" class="ar">شرم الشيخ</text>
          <text x="1590" y="846.300">Aswan</text><text x="1590" y="855" class="ar">أسوان</text>
          <text x="1542.800" y="907.700">Abu Simbel</text><text x="1543" y="916.700" class="ar">أبو سمبل</text><text x="1543" y="925.300" class="ar">السياحية</text>
          <text x="1266.700" y="375">Χανιά</text><text x="1307" y="374">Heraklion</text><text x="1307" y="382.300">Ηράκλειο</text><text x="1295" y="394.300">Kriti</text>
          <text x="1601.700" y="403.300" class="cn">Cyprus</text><text x="1572" y="422.300">Paphos</text><text x="1572" y="431">Πάφος</text>
          <text x="1670" y="439" class="cn" style="text-anchor:start">Leb</text><text x="1668" y="464" class="ct" style="text-anchor:start;font-weight:500">Beirut</text><text x="1680" y="477" class="ar">بيروت</text>
          <text x="1665" y="494">Haifa</text><text x="1642" y="527.300" class="ws" style="text-anchor:start">WEST BANK</text>
          <text x="1640.700" y="546.700" class="ct">Jerusalem</text>
          <text x="1660.700" y="579.300" class="cn">Israel</text>
          <text x="1481" y="549" class="ct">Alexandria</text><text x="1481" y="561" class="ar" style="font-size:10.500px">الإسكندرية</text>
          <text x="1529" y="598" class="ct">Cairo</text><text x="1529" y="610" class="ar" style="font-size:10.500px">القاهرة</text>
          <text x="1517.700" y="631.700">6th of</text><text x="1517.700" y="641">October City</text><text x="1517.700" y="650" class="ar">مدينة السادس</text><text x="1517.700" y="659" class="ar">من أكتوبر</text>
          <text x="1320.700" y="639.300">Siwa Oasis</text><text x="1320.700" y="648.700" class="ar">سيوة</text>
          <text x="1676.700" y="636.700">Aqaba</text><text x="1676" y="646.700" class="ar">العقبة</text>
          <text x="1051" y="424.500" class="se">Mediterranean Sea</text>
        </g>
        <g class="pins" transform="translate(1000 590) scale(.3333)">
          <use href="#pin" class="pin-o" x="128" y="100"/><use href="#pin" class="pin-r" x="120" y="108"/><use href="#pin" class="pin-b" x="145" y="105"/><use href="#pin" class="pin-o" x="133" y="112"/>
          <use href="#pin" class="pin-g" x="175" y="222"/><use href="#pin" class="pin-o" x="168" y="235"/><use href="#pin" class="pin-o" x="205" y="235"/><use href="#pin" class="pin-g" x="178" y="242"/><use href="#pin" class="pin-g" x="215" y="243"/><use href="#pin" class="pin-g" x="193" y="283"/><use href="#pin" class="pin-g" x="155" y="292"/><use href="#pin" class="pin-b" x="165" y="297"/><use href="#pin" class="pin-g" x="190" y="320"/>
          <use href="#pin" class="pin-g" x="340" y="245"/><use href="#pin" class="pin-o" x="375" y="252"/><use href="#pin" class="pin-r" x="365" y="252"/><use href="#pin" class="pin-g" x="345" y="257"/><use href="#pin" class="pin-b" x="340" y="270"/><use href="#pin" class="pin-b" x="340" y="292"/><use href="#pin" class="pin-g" x="355" y="290"/><use href="#pin" class="pin-g" x="350" y="302"/>
          <use href="#pin" class="pin-g" x="615" y="105"/><use href="#pin" class="pin-g" x="600" y="162"/><use href="#pin" class="pin-b" x="578" y="127"/><use href="#pin" class="pin-r" x="576" y="165"/><use href="#pin" class="pin-g" x="567" y="203"/><use href="#pin" class="pin-g" x="627" y="203"/>
        </g>
      </svg>
      <div class="fc-ctl fc-mt d-flex"><div>Map</div><div>Satellite</div></div>
      <div class="fc-ctl fc-fs d-flex align-items-center justify-content-center"><svg width="18" height="18" viewBox="0 0 18 18" fill="none" stroke="#666" stroke-width="2"><path d="M1 6V1h5M12 1h5v5M17 12v5h-5M6 17H1v-5"/></svg></div>
      <div class="fc-ctl fc-pg d-flex align-items-center justify-content-center"><svg width="16" height="24" viewBox="0 0 16 24"><circle cx="8" cy="4.500" r="4" fill="#fdb62f" stroke="#c5901f" stroke-width=".8"/><path d="M3.500 9h9l2 1.500 1 7h-2l-1-4v10H9.500v-6h-3v6H3.500v-10l-1 4h-2l1-7Z" fill="#fdb62f" stroke="#c5901f" stroke-width=".8"/><path d="M6 9.500h4l-2 3Z" fill="#ef7f1a"/></svg></div>
      <div class="fc-ctl fc-zm"></div>
    </div>
  </main>
</div>
<script src="https://cdn.jsdelivr.net/npm/bootstrap@5.3.0/dist/js/bootstrap.bundle.min.js"></script>
<script>
// Round the hand-traced map polylines and blobs into curves.
document.querySelectorAll('.rd path,.rm path,.ds path,.wt path,.gr path').forEach(function(el){
  var d=el.getAttribute('d');
  if(!/^M[\d., -]+Z?$/.test(d))return;
  var closed=/Z$/.test(d),n=d.replace(/[MZ]/g,'').trim().split(/[ ,]+/).map(Number),p=[];
  for(var i=0;i<n.length;i+=2)p.push([n[i],n[i+1]]);
  if(p.length<3)return;
  var L=p.length,g=function(k){return closed?p[(k+L)%L]:p[Math.max(0,Math.min(L-1,k))]};
  var o='M'+p[0].join(',');
  for(var k=0;k<(closed?L:L-1);k++){
    var a=g(k-1),b=g(k),c=g(k+1),e=g(k+2);
    o+='C'+(b[0]+(c[0]-a[0])/6).toFixed(1)+','+(b[1]+(c[1]-a[1])/6).toFixed(1)+' '+(c[0]-(e[0]-b[0])/6).toFixed(1)+','+(c[1]-(e[1]-b[1])/6).toFixed(1)+' '+c.join(',');
  }
  el.setAttribute('d',o+(closed?'Z':''));
});
</script>
</body>
</html>
